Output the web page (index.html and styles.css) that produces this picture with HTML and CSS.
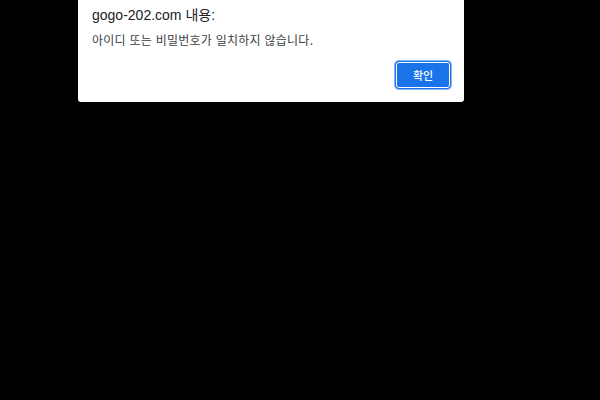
FILE: index.html
```html
<!DOCTYPE html>
<html lang="ko">
<head>
<meta charset="utf-8">
<link rel="stylesheet" href="styles.css">
</head>
<body>
<div class="dialog">
  <div class="title">gogo-202.com 내용:</div>
  <div class="message">아이디 또는 비밀번호가 일치하지 않습니다.</div>
  <div class="actions">
    <button class="ok">확인</button>
  </div>
</div>
</body>
</html>
```
FILE: styles.css
```css
html, body {
  margin: 0;
  padding: 0;
  background: #000;
  width: 600px;
  height: 400px;
  overflow: hidden;
}
.dialog {
  margin-left: 78px;
  width: 386px;
  height: 102px;
  box-sizing: border-box;
  background: #fff;
  border-radius: 0 0 3px 3px;
  padding: 5px 13px 0 14px;
  font-family: "Liberation Sans", "Noto Sans CJK KR", sans-serif;
}
.title {
  font-size: 14px;
  line-height: 20px;
  color: #202124;
}
.message {
  margin-top: 7px;
  font-size: 12px;
  line-height: 16px;
  letter-spacing: 0.25px;
  color: #3c4043;
  font-family: "Noto Sans CJK KR", sans-serif;
}
.actions {
  display: flex;
  justify-content: flex-end;
  margin-top: 13px;
}
.ok {
  width: 56px;
  height: 28px;
  box-sizing: border-box;
  background: #1a73e8;
  color: #fff;
  border: 1px solid #1a73e8;
  box-shadow: inset 0 0 0 1px #fff, 0 0 0 1px #8ab4f8;
  border-radius: 4px;
  font-family: "Noto Sans CJK KR", sans-serif;
  font-size: 11px;
  font-weight: 500;
  padding: 0;
  margin-right: 0;
}
```
